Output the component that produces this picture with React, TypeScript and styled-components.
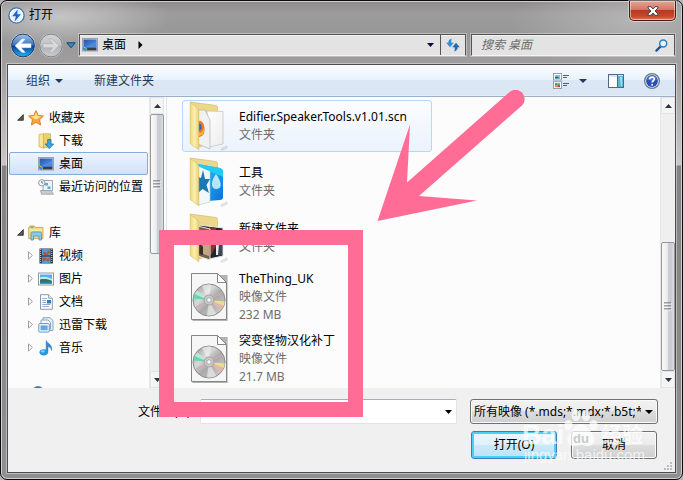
import React from "react";
import styled, { createGlobalStyle, css } from "styled-components";

const PINK = "#ff6c95";
const INK = "#1e395b";

const GlobalStyle = createGlobalStyle`
  *, *::before, *::after { box-sizing: border-box; }
  body { margin: 0; background: #b9b5b5; overflow: hidden; }
  body, button, input, select {
    font-family: "Noto Sans", "Noto Sans CJK SC", sans-serif;
    font-size: 12px;
    line-height: 18px;
    color: #000;
  }
  button { padding: 0; border: 0; background: none; text-align: left; }
  svg { display: block; flex: none; }
`;

/* ---------- window frame ---------- */

const DialogWindow = styled.main`
  position: relative;
  display: flex;
  flex-direction: column;
  height: 100vh;
  min-height: 400px;
  padding: 0 6px 6px;
  border: 1px solid #0c0a0e;
  border-radius: 7px;
  box-shadow: inset 0 0 0 1px #d0cfd0;
  background:
    radial-gradient(ellipse 110px 30px at 60px 16px, rgba(225, 225, 225, 0.6), transparent),
    radial-gradient(ellipse 120px 50px at 630px 20px, rgba(190, 190, 190, 0.7), transparent),
    linear-gradient(#8d898b 0, #9c9c9c 12px, #979797 36px, #a09e9e 64px, #b4b0b0 110px, #c9c6c6 164px, #858282 165px, #8f8f8f 100%);
`;

const TitleBar = styled.header`
  display: flex;
  align-items: center;
  gap: 4px;
  height: 28px;
  flex: none;
  padding-left: 1px;
`;

const Title = styled.h1`
  flex: 1;
  margin: 0;
  font-size: 12px;
  font-weight: 400;
`;

const CloseButton = styled.button`
  display: flex;
  align-items: center;
  justify-content: center;
  align-self: flex-start;
  width: 47px;
  height: 20px;
  border: 1px solid #4b1a17;
  border-top: 0;
  border-radius: 0 0 5px 5px;
  box-shadow: inset 0 0 0 1px rgba(255, 220, 210, 0.6), 0 0 0 1px rgba(255, 255, 255, 0.4);
  background: linear-gradient(#e3a595 0, #d27763 45%, #b93720 50%, #c4472c 80%, #dd7c56 100%);
`;

const AddressRow = styled.nav`
  display: flex;
  align-items: center;
  gap: 5px;
  height: 35px;
  flex: none;
  padding: 0 1px 3px 3px;
`;

const HistoryButtons = styled.div`
  display: flex;
  align-items: center;
  gap: 2px;
  margin-right: -2px;
`;

const glassField = css`
  display: flex;
  align-items: center;
  height: 22px;
  border: 1px solid #555;
  border-bottom-color: #f4f4f4;
  background: #e3e3e3;
  box-shadow: inset 0 1px #f2f2f2, 0 0 0 1px rgba(255, 255, 255, 0.35);
`;

const AddressBar = styled.div`
  ${glassField}
  flex: 384;
  padding-left: 2px;
`;

const Crumb = styled.button`
  display: flex;
  align-items: center;
  gap: 4px;
`;

const CrumbArrow = styled.button`
  margin-left: 12px;
`;

const AddressEnd = styled.div`
  display: flex;
  align-items: center;
  align-self: stretch;
  margin-left: auto;
`;

const RefreshButton = styled.button`
  display: flex;
  align-items: center;
  justify-content: center;
  align-self: stretch;
  width: 25px;
  margin-left: 6px;
  border-left: 1px solid #555;
`;

const SearchBox = styled.label`
  ${glassField}
  flex: 186;
  padding: 0 6px 0 9px;
`;

const SearchInput = styled.input`
  flex: 1;
  min-width: 0;
  padding: 0;
  border: 0;
  outline: 0;
  background: none;
  &::placeholder { color: #6d6d6d; opacity: 1; font-style: italic; }
`;

const Client = styled.section`
  display: flex;
  flex-direction: column;
  flex: 1;
  min-height: 0;
  border: 1px solid #4c4a4c;
  box-shadow: 0 0 0 1px rgba(255, 255, 255, 0.4);
  background: #f0f0f0;
`;

/* ---------- toolbar ---------- */

const Toolbar = styled.div`
  display: flex;
  align-items: center;
  height: 32px;
  flex: none;
  padding: 0 15px 0 18px;
  border-bottom: 1px solid #a0afc3;
  box-shadow: inset 0 -1px #e4edf8;
  background: linear-gradient(#fbfdff 0, #e8f2fb 15px, #dce7f5 15px, #dbe6f4 100%);
`;

const ToolButton = styled.button<{ $gap?: number }>`
  display: flex;
  align-items: center;
  gap: 5px;
  margin-right: ${(p) => p.$gap ?? 0}px;
  color: ${INK};
`;

const Spring = styled.div`
  flex: 1;
`;

/* ---------- panes ---------- */

const Panes = styled.div`
  display: flex;
  flex: 1;
  min-height: 0;
  background: #fcfcfc;
`;

const NavPane = styled.aside`
  display: flex;
  width: 159px;
  flex: none;
  border-right: 1px solid #dbe7f5;
  padding-right: 2px;
`;

const NavTree = styled.div`
  flex: 1;
  min-width: 0;
  padding: 9px 1px 0;
  overflow: hidden;
`;

const NavGroup = styled.div`
  margin-bottom: 23px;
`;

const NavItem = styled.button<{ $level: number; $selected?: boolean }>`
  display: flex;
  align-items: center;
  width: 100%;
  height: 23px;
  gap: 4px;
  padding-left: ${(p) => (p.$level ? 17 : 7)}px;
  border: 1px solid ${(p) => (p.$selected ? "#84acdd" : "transparent")};
  border-radius: 2px;
  background: ${(p) => (p.$selected ? "linear-gradient(#edf4fd, #cfe2fb)" : "none")};
  white-space: nowrap;
`;

const NavLabel = styled.span`
  margin-left: 1px;
`;

const FilePane = styled.div`
  display: flex;
  flex: 1;
  min-width: 0;
`;

const FileList = styled.div`
  display: flex;
  flex-direction: column;
  align-items: flex-start;
  gap: 4px;
  flex: 1;
  min-width: 0;
  padding: 3px 15px 0;
  overflow: hidden;
`;

const FileTile = styled.button<{ $hover?: boolean }>`
  display: flex;
  align-items: center;
  gap: 10px;
  width: 250px;
  max-width: 100%;
  flex: none;
  padding: 0 6px;
  border: 1px solid ${(p) => (p.$hover ? "#b8d6fb" : "transparent")};
  border-radius: 3px;
  background: ${(p) => (p.$hover ? "linear-gradient(#fbfcfe, #ebf3fd)" : "none")};
`;

const FileText = styled.span`
  display: flex;
  flex-direction: column;
  padding: 1px 0;
  white-space: nowrap;
`;

const Detail = styled.span`
  color: #6d6d6d;
`;

/* ---------- scroll bars ---------- */

const ScrollTrack = styled.div`
  display: flex;
  flex-direction: column;
  width: 15px;
  flex: none;
  border-left: 1px solid #e6e6e6;
  background: #efefef;
`;

const ScrollArrow = styled.button`
  display: flex;
  align-items: center;
  justify-content: center;
  height: 17px;
  flex: none;
  border: 1px solid #e2e4e6;
  background: #f4f5f6;
`;

const ScrollSpace = styled.div<{ $size: number }>`
  flex: ${(p) => p.$size} 1 0;
`;

const ScrollThumb = styled.div<{ $size: number }>`
  display: flex;
  align-items: center;
  justify-content: center;
  flex: ${(p) => p.$size} 1 0;
  border: 1px solid #979797;
  border-radius: 2px;
  background: linear-gradient(90deg, #fafafa 0, #ececee 45%, #cdd0d7 50%, #c8cbd3 75%, #dcdee3 100%);
`;

/* ---------- footer ---------- */

const Footer = styled.form`
  display: grid;
  grid-template-columns: 1fr 188px;
  gap: 7px 13px;
  flex: none;
  height: 84px;
  padding: 11px 17px 12px 130px;
  align-content: start;
`;

const NameField = styled.div`
  display: flex;
  align-items: center;
  gap: 3px;
`;

const NameLabel = styled.label`
  width: 59px;
  white-space: nowrap;
`;

const NameCombo = styled.div`
  display: flex;
  align-items: center;
  flex: 1;
  min-width: 0;
  height: 25px;
  padding-right: 4px;
  border: 1px solid #e2e3ea;
  border-top-color: #abadb3;
  border-radius: 2px;
  background: #fff;
`;

const NameInput = styled.input`
  flex: 1;
  min-width: 0;
  border: 0;
  outline: 0;
  background: none;
`;

const TypePicker = styled.div`
  display: grid;
  grid-template-columns: 1fr 12px;
  align-items: center;
  height: 25px;
  border: 1px solid #707070;
  border-radius: 3px;
  box-shadow: inset 0 0 0 1px #fafafa;
  background: linear-gradient(#f2f2f2 0, #ebebeb 50%, #dddddd 50%, #cfcfcf 100%);
  & > svg { grid-area: 1 / 2; pointer-events: none; }
`;

const TypeSelect = styled.select`
  grid-area: 1 / 1 / 2 / 3;
  width: 100%;
  min-width: 0;
  height: 23px;
  padding: 0 16px 0 3px;
  border: 0;
  outline: 0;
  appearance: none;
  background: none;
`;

const Actions = styled.div`
  grid-column: 2;
  display: flex;
  justify-content: space-between;
  padding: 0 1px;
`;

const PushButton = styled.button<{ $primary?: boolean }>`
  width: 86px;
  height: 28px;
  border: 1px solid ${(p) => (p.$primary ? "#3c7fb1" : "#707070")};
  border-radius: 3px;
  text-align: center;
  box-shadow: inset 0 0 0 ${(p) => (p.$primary ? "2px #48d1f7" : "1px #fbfbfb")};
  background: ${(p) =>
    p.$primary
      ? "linear-gradient(#ecf6fc 0, #def2fb 50%, #cbeafa 50%, #bbe2f6 100%)"
      : "linear-gradient(#f2f2f2 0, #ebebeb 50%, #dddddd 50%, #cfcfcf 100%)"};
`;

const Grip = styled.div`
  position: absolute;
  right: 9px;
  bottom: 8px;
`;

/* ---------- overlays ---------- */

const Highlight = styled.div`
  position: absolute;
  left: 158px;
  top: 229px;
  width: 204px;
  height: 187px;
  border: 15px solid ${PINK};
  pointer-events: none;
`;

const Pointer = styled.div`
  position: absolute;
  left: 376px;
  top: 89px;
  pointer-events: none;
`;

const Watermark = styled.div`
  position: absolute;
  right: 36px;
  bottom: 16px;
  width: 124px;
  color: #fff;
  opacity: 0.72;
  pointer-events: none;
  font-family: "Liberation Sans", "Noto Sans CJK SC", sans-serif;
`;

const WatermarkTop = styled.div`
  display: flex;
  align-items: flex-end;
  height: 40px;
  font-size: 27px;
  font-weight: 700;
  line-height: 24px;
`;

const WatermarkName = styled.span`
  margin-left: 3px;
  font-size: 21px;
`;

const WatermarkUrl = styled.div`
  padding-left: 2px;
  font-size: 15px;
  line-height: 16px;
`;

/* ---------- small drawings ---------- */

const Caret = ({ color = "#000", w = 7, h = 4 }: { color?: string; w?: number; h?: number }) => (
  <svg width={w} height={h} viewBox="0 0 8 4" preserveAspectRatio="none">
    <path d="M0 0H8L4 4Z" fill={color} />
  </svg>
);

const AppIcon = () => (
  <svg width="17" height="17" viewBox="0 0 17 17">
    <circle cx="8.5" cy="8.5" r="7.6" fill="#e9f2fc" stroke="#3c78b8" strokeWidth="1.4" />
    <circle cx="8.5" cy="8.5" r="6.2" fill="none" stroke="#fff" />
    <path d="M9.8 2.2L4.2 9.3H7.8L6.6 14.8L12.8 7.2H9.2Z" fill="#1767cf" />
  </svg>
);

const CloseGlyph = () => (
  <svg width="12" height="10" viewBox="0 0 12 10">
    <path d="M1 .7H4L6 3 8 .7H11V2L8 5 11 8V9.3H8L6 7 4 9.3H1V8L4 5 1 2Z" fill="#fff" stroke="#44434f" strokeWidth="1" />
  </svg>
);

const RoundArrow = ({ back }: { back?: boolean }) => {
  const id = back ? "navBack" : "navForward";
  return (
    <svg width="26" height="26" viewBox="0 0 26 26">
      <defs>
        <linearGradient id={id} x1="0" y1="0" x2="0" y2="1">
          <stop offset="0" stopColor={back ? "#a3c3e6" : "#d3d4d6"} />
          <stop offset=".48" stopColor={back ? "#3a72bb" : "#c0c2c4"} />
          <stop offset=".52" stopColor={back ? "#0b3f94" : "#aeb0b3"} />
          <stop offset="1" stopColor={back ? "#22b4f0" : "#cbcdcf"} />
        </linearGradient>
      </defs>
      <circle cx="13" cy="13.5" r="12.2" fill={back ? "#d8dee6" : "#c7c7c7"} />
      <circle cx="13" cy="13.5" r="11.4" fill={`url(#${id})`} stroke={back ? "#1c3c70" : "#7f8183"} />
      <path
        d={back ? "M5 13.7L12 7H15.2L11.2 11.7H21V15.7H11.2L15.2 20.4H12Z" : "M21 13.7L14 7H10.8L14.8 11.7H5V15.7H14.8L10.8 20.4H14Z"}
        fill={back ? "#fff" : "#d9dadb"}
        stroke={back ? "#dbe8f7" : "#a2a4a6"}
        strokeWidth=".5"
      />
    </svg>
  );
};

const HistoryCaret = () => (
  <svg width="10" height="7" viewBox="0 0 10 7">
    <path d="M.8 .8H9.2L5 5.8Z" fill="#2b8fc9" stroke="#1b416b" />
  </svg>
);

const DesktopIcon = () => (
  <svg width="16" height="14" viewBox="0 0 16 14">
    <defs>
      <linearGradient id="desk" x1="0" y1="0" x2="1" y2="1">
        <stop offset="0" stopColor="#2d50a8" />
        <stop offset=".5" stopColor="#3c78d0" />
        <stop offset="1" stopColor="#2e62bd" />
      </linearGradient>
    </defs>
    <rect x=".5" y=".5" width="15" height="12.5" fill="#d3d8df" stroke="#9aa3af" />
    <rect x="1.5" y="1.5" width="13" height="8.5" fill="url(#desk)" />
    <path d="M4 9L14.5 3V9.5Z" fill="#6ba0e6" opacity=".55" />
    <rect x="5" y="10" width="9.5" height="2.4" fill="#393d45" />
    <circle cx="3.2" cy="10.6" r="2.2" fill="#2b7fd2" />
    <path d="M2.2 9h1.3v1.3H2.2z" fill="#f3c533" />
    <path d="M3.5 10.4h1.4v1.4H3.5z" fill="#8bcf3c" />
  </svg>
);

const RefreshIcon = () => (
  <svg width="14" height="14" viewBox="0 0 14 14">
    <path d="M5.8 .6C3.2 1.2 2.4 2.8 2.3 4.8H.2L4 9.2 7.8 4.8H5.3C5.2 3.2 5.2 2 5.8 .6Z" fill="#2f8fd0" />
    <path d="M8.2 13.4C10.8 12.8 11.6 11.2 11.7 9.2H13.8L10 4.8 6.2 9.2H8.7C8.8 10.8 8.8 12 8.2 13.4Z" fill="#2668b3" />
  </svg>
);

const SearchIcon = () => (
  <svg width="13" height="13" viewBox="0 0 13 13">
    <path d="M5.6 7.4L1.4 11.6" stroke="#27508f" strokeWidth="2.2" strokeLinecap="round" />
    <circle cx="8.2" cy="4.6" r="3.5" fill="#e9f5fd" stroke="#2e7fc0" strokeWidth="1.5" />
  </svg>
);

const ViewIcon = () => (
  <svg width="17" height="16" viewBox="0 0 17 16">
    <rect x=".5" y=".5" width="8" height="6.5" fill="#fff" stroke="#8fa0b4" />
    <rect x="2" y="2" width="5" height="3.5" fill="#79c3dd" />
    <path d="M2 5.5V4.3L4 3.6 7 5.5Z" fill="#1f6a44" />
    <rect x=".5" y="8.7" width="8" height="6.8" fill="#fff" stroke="#8fa0b4" />
    <path d="M2 10.2h2.5v2H2z" fill="#3b77c9" />
    <path d="M4.5 10.2H7v2H4.5z" fill="#6aab38" />
    <path d="M2 12.2h2.5v2H2z" fill="#d9852d" />
    <path d="M4.5 12.2H7v2H4.5z" fill="#b73b32" />
    <path d="M10 2.5h6M10 4.5h4M10 10.5h6M10 12.5h4" stroke="#4b617d" />
  </svg>
);

const PreviewIcon = () => (
  <svg width="16" height="14" viewBox="0 0 16 14">
    <rect x=".5" y=".5" width="15" height="13" fill="#fff" stroke="#4f6888" />
    <path d="M1 2H15" stroke="#b3cbe0" />
    <rect x="10" y="2" width="5" height="11" fill="#5fb4d3" />
    <path d="M12 3h2v9h-1z" fill="#a9e0ee" />
    <path d="M9.5 1V13" stroke="#4f6888" />
  </svg>
);

const HelpIcon = () => (
  <svg width="16" height="16" viewBox="0 0 16 16">
    <circle cx="8" cy="8" r="7.4" fill="#e4e8ee" stroke="#6c7683" strokeWidth="1.2" />
    <circle cx="8" cy="8" r="5.9" fill="#2450b8" />
    <path d="M3 6.5A5.2 5.2 0 0 1 13 6.5C10 8 6 8 3 6.5Z" fill="#6f96de" opacity=".6" />
    <path d="M5.7 6.3C5.7 3.4 10.4 3.5 10.3 6.2C10.3 7.7 8.1 7.8 8.1 9.6" fill="none" stroke="#fff" strokeWidth="1.7" />
    <circle cx="8.1" cy="11.7" r="1" fill="#fff" />
  </svg>
);

const Twisty = ({ open }: { open?: boolean }) =>
  open ? (
    <svg width="7" height="7" viewBox="0 0 7 7">
      <path d="M6.3 .6V6.3H.6Z" fill="#595959" stroke="#262626" strokeWidth=".8" />
    </svg>
  ) : (
    <svg width="7" height="9" viewBox="0 0 7 9">
      <path d="M1.5 .9L5.4 4.5L1.5 8.1Z" fill="#fff" stroke="#a0a0a0" />
    </svg>
  );

type IconName =
  | "star" | "download" | "desktop" | "recent" | "library" | "video"
  | "picture" | "document" | "thunder" | "music" | "computer";

const NavIcon = ({ name }: { name: IconName }) => {
  if (name === "desktop") return <DesktopIcon />;
  return (
    <svg width="16" height="16" viewBox="0 0 16 16">
      {name === "star" && (
        <>
          <path d="M8 .6L10.2 5.4 15.4 6 11.6 9.6 12.6 15 8 12.3 3.4 15 4.4 9.6 .6 6 5.8 5.4Z" fill="#f9a63a" stroke="#df7422" strokeWidth=".9" />
          <path d="M8 2.2L9.5 6.1 13.3 6.6 8 9.4 2.7 6.6 6.5 6.1Z" fill="#fde08e" />
        </>
      )}
      {name === "download" && (
        <>
          <path d="M1 1.5L5.5 .8V15.2L1 13.8Z" fill="#f8e694" stroke="#cfae4a" strokeWidth=".7" />
          <path d="M5.5 .8H12.5V13.5L5.5 15.2Z" fill="#eccf6d" stroke="#cfae4a" strokeWidth=".7" />
          <path d="M9.7 6.5H13V11H15.6L11.3 15.6 7.2 11H9.7Z" fill="#3ba4e2" stroke="#1a6cb5" strokeWidth=".8" />
        </>
      )}
      {name === "recent" && (
        <>
          <path d="M5 1.5H14.5V12H5Z" fill="#eef3f8" stroke="#9aa7b5" />
          <path d="M7 4h3v2.5H7zM9.5 7.5h3V10h-3z" fill="#5aa9d8" />
          <path d="M2.5 11.5H13L15.5 15.2H3.5Z" fill="#c9cdd2" stroke="#8d949c" strokeWidth=".7" />
          <circle cx="3.8" cy="3.8" r="3.2" fill="#f3f5f7" stroke="#8f979f" />
          <path d="M3.8 2V4H5.2" fill="none" stroke="#555" strokeWidth=".8" />
        </>
      )}
      {name === "library" && (
        <>
          <path d="M.7 2.2L2 1H6.4L7.4 2.4H15V13.6H.7Z" fill="#f2da83" stroke="#c3a045" strokeWidth=".8" />
          <path d="M1.2 5H14.6" stroke="#fdf3c4" />
          <path d="M2.5 2.2h3" stroke="#57ac4a" strokeWidth="1.2" />
          <path d="M3 8.5C3 7.4 3.6 7 4.5 7H12C13 7 13.5 7.4 13.5 8.5V15H11V11H5.5V15H3Z" fill="#8ccbe8" stroke="#4793bd" strokeWidth=".8" />
        </>
      )}
      {name === "video" && (
        <>
          <rect x="1.5" y=".5" width="13.5" height="15" fill="#303338" />
          <rect x="4" y="1" width="8.5" height="6.4" fill="#4e9ed6" />
          <rect x="4" y="8.6" width="8.5" height="6.4" fill="#4e9ed6" />
          <path d="M4.5 5L7 3.5 8.3 5.5 10.5 2 12 4.5 9.5 7H6ZM4.5 10L7 9.3 9 11 12 9.5 10.5 13.5 7.5 12 5 14Z" fill="#b5563c" />
          <path d="M2.7 1V15.3M13.8 1V15.3" stroke="#dfe6ec" strokeWidth="1" strokeDasharray="1 1" />
        </>
      )}
      {name === "picture" && (
        <>
          <rect x=".5" y="2" width="15" height="12" fill="#fff" stroke="#8d99a6" />
          <rect x="2" y="3.5" width="12" height="9" fill="#5aaee5" />
          <path d="M2 6.5C5 5 9 5.5 14 8V10H2Z" fill="#c4e7f6" />
          <path d="M2 8.5C6 7.5 10 8 14 10V12.5H2Z" fill="#2b7c5b" />
          <path d="M2 11H14V12.5H2Z" fill="#2c82a6" />
        </>
      )}
      {name === "document" && (
        <>
          <path d="M2.5 .7H10.5L14.3 4.3V15.3H2.5Z" fill="#fff" stroke="#8d99a6" />
          <path d="M10.5 .7V4.3H14.3" fill="#dfe6ed" stroke="#8d99a6" strokeWidth=".8" />
          <path d="M4.3 4.5H9M4.3 6.5H8M4.3 8.5H8M4.3 10.5H12.5M4.3 12.5H11" stroke="#96a9d0" />
          <rect x="9" y="6" width="4" height="3.5" fill="#2f7db8" />
        </>
      )}
      {name === "thunder" && (
        <>
          <path d="M5 .7H12L15 3.6V13.5H5Z" fill="#e4eff9" stroke="#86a7c4" />
          <path d="M3 3H10L12.5 5.5V12H3Z" fill="#f4f9fd" stroke="#86a7c4" />
          <rect x=".8" y="6.5" width="10.5" height="8.6" rx="1" fill="#e8f3fc" stroke="#6d9cc6" />
          <rect x="2.6" y="8.4" width="7" height="4.8" fill="#61a9e6" />
        </>
      )}
      {name === "music" && (
        <>
          <path d="M8.2 .5C9 3.6 14.8 4.2 13.6 10.5C13 7.8 11.5 6.8 9.9 6.5V12H8.2Z" fill="#2c8bd6" stroke="#1d6fb8" strokeWidth=".5" />
          <ellipse cx="5.8" cy="12.3" rx="4.3" ry="3.1" fill="#2b96df" />
          <ellipse cx="4.8" cy="11.4" rx="2" ry="1.1" fill="#8fd0f5" />
        </>
      )}
      {name === "computer" && <circle cx="10" cy="7" r="6.5" fill="#3d66b4" stroke="#6f89bd" />}
    </svg>
  );
};

type Art = "browser" | "tools" | "photo" | "disc";

const FolderArt = ({ art }: { art: Art }) => (
  <svg width="40" height="50" viewBox="0 0 40 50">
    <defs>
      <linearGradient id={`flap-${art}`} x1="0" y1="0" x2="1" y2="0">
        <stop offset="0" stopColor="#f0d680" />
        <stop offset=".5" stopColor="#fbefad" />
        <stop offset="1" stopColor="#edd078" />
      </linearGradient>
      <linearGradient id={`inside-${art}`} x1="0" y1="0" x2="1" y2="1">
        <stop offset="0" stopColor={art === "tools" ? "#23d1f2" : "#ffffff"} />
        <stop offset="1" stopColor={art === "tools" ? "#0b6fe0" : "#ececec"} />
      </linearGradient>
    </defs>
    <path d="M31 48L38 44 39 47 33 50Z" fill="#000" opacity=".1" />
    <path d="M1.5 1L27.5 4.5 28.5 6V40L10 46Z" fill="#ecd78c" stroke="#d1b55f" strokeWidth=".6" />
    {art === "browser" && (
      <>
        <path d="M18 10L34 10.5V43L20 46Z" fill={`url(#inside-${art})`} stroke="#b9b9b9" strokeWidth=".6" />
        <path d="M9 9H16L21 19V48L9 43Z" fill="#f1f1f0" stroke="#a9a9a9" strokeWidth=".6" />
        <path d="M9 20C13 19 15.5 23 15.5 28.5S13 36 9 36Z" fill="#e8772e" />
        <path d="M9 22C12 22 13 25 12.5 28L9 31Z" fill="#3167ad" />
        <path d="M9 31C12 33 13.5 31 15 27C15.5 33 13 35 9 35Z" fill="#f6b53b" />
      </>
    )}
    {art === "tools" && (
      <>
        <path d="M9 7L31 11Q34 12 34 15V40Q34 43 31 43L19 44Z" fill={`url(#inside-${art})`} />
        <path d="M27 17C32 24 34 31 28 32S21 25 27 17Z" fill="#d4f3fd" opacity=".85" />
        <path d="M9 9L21 14V45L9 48Z" fill="#f1f6f9" stroke="#b8c8d4" strokeWidth=".6" />
        <path d="M9 7L31 11 34 15V20L9 9Z" fill="#20cdf0" />
        <path d="M14 13L16 22 21 22 17.5 28 20 36 13.5 32 9 36V20L12 21Z" fill="#1879b5" />
      </>
    )}
    {art === "photo" && (
      <>
        <path d="M10 12L34 15V43L20 46Z" fill="#20242e" stroke="#e8e8e8" />
        <path d="M20 14L27 15V33L22 42H20Z" fill="#7d3c2f" />
        <path d="M28 24L33 30V42L29 43Z" fill="#3f4653" />
        <path d="M27 29l3 1-1 12h-2z" fill="#e9eaea" />
        <path d="M9 13L21 16V47L9 43Z" fill="#76604b" stroke="#e9e6df" />
        <path d="M13 23L17 20 20 28V43L14 41Z" fill="#c3a684" />
        <path d="M10 30L14 34V42L10 41Z" fill="#38302c" />
      </>
    )}
    <path d="M1.2 1.2L9 7.5Q9.8 8.2 9.8 10V48.8L1.2 42.5Z" fill={`url(#flap-${art})`} stroke="#d6ba62" strokeWidth=".6" />
  </svg>
);

const DiscFileArt = () => (
  <svg width="40" height="50" viewBox="0 0 40 50">
    <defs>
      <linearGradient id="disc" x1="0" y1="0" x2="1" y2="1">
        <stop offset="0" stopColor="#8f8f8f" />
        <stop offset=".35" stopColor="#d9d9d9" />
        <stop offset=".55" stopColor="#a9a9a9" />
        <stop offset="1" stopColor="#d5d5d5" />
      </linearGradient>
    </defs>
    <path d="M3.5 3H38.6V49H3.5Z" fill="#777" opacity=".55" />
    <path d="M2.5 1.5H28.5L37.5 10.5V47.5H2.5Z" fill="#f6f6f6" stroke="#858585" />
    <path d="M28.5 1.5V10.5H37.5Z" fill="#fff" stroke="#858585" />
    <circle cx="20" cy="28" r="16" fill="url(#disc)" stroke="#8a8a8a" />
    <path d="M20 28L13 14A16 16 0 0 1 22 12.4Z" fill="#f3f3f3" opacity=".6" />
    <path d="M20 28L27 42A16 16 0 0 1 18 43.6Z" fill="#f3f3f3" opacity=".6" />
    <path d="M20 28L5.6 22A16 16 0 0 0 4.6 26.5Z" fill="#64d7b2" />
    <path d="M20 28L8.3 18.5A16 16 0 0 0 5.6 22Z" fill="#b8e8d0" />
    <path d="M20 28L34.5 34A16 16 0 0 0 35.8 29.5Z" fill="#ecdc8e" />
    <path d="M20 28L31.5 38.5A16 16 0 0 0 34.5 34Z" fill="#e4b6b0" />
    <path d="M7 35.5L33 20.5" stroke="#d5a5ba" strokeWidth="1.3" />
    <circle cx="20" cy="28" r="5" fill="#c9c9c9" stroke="#a4a4a4" />
    <circle cx="20" cy="28" r="2.2" fill="#fff" stroke="#999" strokeWidth=".8" />
  </svg>
);

const ThumbGrip = () => (
  <svg width="8" height="9" viewBox="0 0 8 9">
    <path d="M0 1H7M0 4H7M0 7H7" stroke="#555" strokeWidth="1.2" />
    <path d="M0 2H8M0 5H8M0 8H8" stroke="#fff" strokeWidth=".8" />
  </svg>
);

const ScrollBar = ({ before, size, after, name }: { before: number; size: number; after: number; name: string }) => (
  <ScrollTrack>
    <ScrollArrow type="button" aria-label={`${name} 向上`}>
      <svg width="7" height="4" viewBox="0 0 7 4"><path d="M0 4L3.5 0 7 4Z" fill="#333" /></svg>
    </ScrollArrow>
    <ScrollSpace $size={before} />
    <ScrollThumb $size={size}><ThumbGrip /></ScrollThumb>
    <ScrollSpace $size={after} />
    <ScrollArrow type="button" aria-label={`${name} 向下`}>
      <Caret color="#333" />
    </ScrollArrow>
  </ScrollTrack>
);

/* ---------- data ---------- */

type NavEntry = { label?: string; icon: IconName; selected?: boolean };

const favorites: NavEntry[] = [
  { label: "下载", icon: "download" },
  { label: "桌面", icon: "desktop", selected: true },
  { label: "最近访问的位置", icon: "recent" },
];

const libraries: NavEntry[] = [
  { label: "视频", icon: "video" },
  { label: "图片", icon: "picture" },
  { label: "文档", icon: "document" },
  { label: "迅雷下载", icon: "thunder" },
  { label: "音乐", icon: "music" },
];

const files: { name: string; details: string[]; art: Art; hover?: boolean }[] = [
  { name: "Edifier.Speaker.Tools.v1.01.scn", details: ["文件夹"], art: "browser", hover: true },
  { name: "工具", details: ["文件夹"], art: "tools" },
  { name: "新建文件夹", details: ["文件夹"], art: "photo" },
  { name: "TheThing_UK", details: ["映像文件", "232 MB"], art: "disc" },
  { name: "突变怪物汉化补丁", details: ["映像文件", "21.7 MB"], art: "disc" },
];

const Twist = styled.span`
  width: 7px;
`;

const NavRow = ({ label, icon, selected, level, twist }: NavEntry & { level: number; twist?: "open" | "closed" }) => (
  <NavItem type="button" $level={level} $selected={selected} aria-label={label ?? "计算机"}>
    <Twist>{twist && <Twisty open={twist === "open"} />}</Twist>
    <NavIcon name={icon} />
    {label && <NavLabel>{label}</NavLabel>}
  </NavItem>
);

export default function App() {
  return (
    <>
      <GlobalStyle />
      <DialogWindow>
        <TitleBar>
          <AppIcon />
          <Title>打开</Title>
          <CloseButton aria-label="关闭"><CloseGlyph /></CloseButton>
        </TitleBar>

        <AddressRow>
          <HistoryButtons>
            <button type="button" aria-label="后退"><RoundArrow back /></button>
            <button type="button" aria-label="前进"><RoundArrow /></button>
            <button type="button" aria-label="历史记录"><HistoryCaret /></button>
          </HistoryButtons>
          <AddressBar>
            <Crumb type="button"><DesktopIcon />桌面</Crumb>
            <CrumbArrow type="button" aria-label="展开">
              <svg width="5" height="8" viewBox="0 0 5 8"><path d="M.5 0L4.5 4 .5 8Z" /></svg>
            </CrumbArrow>
            <AddressEnd>
              <button type="button" aria-label="以前的位置"><Caret color="#04045c" /></button>
              <RefreshButton type="button" aria-label="刷新"><RefreshIcon /></RefreshButton>
            </AddressEnd>
          </AddressBar>
          <SearchBox>
            <SearchInput placeholder="搜索 桌面" aria-label="搜索 桌面" />
            <SearchIcon />
          </SearchBox>
        </AddressRow>

        <Client>
          <Toolbar>
            <ToolButton type="button" $gap={31}>组织<Caret color={INK} w={8} /></ToolButton>
            <ToolButton type="button">新建文件夹</ToolButton>
            <Spring />
            <ToolButton type="button" $gap={9} aria-label="视图"><ViewIcon /></ToolButton>
            <ToolButton type="button" $gap={21} aria-label="更多视图"><Caret color={INK} w={8} /></ToolButton>
            <ToolButton type="button" $gap={20} aria-label="预览窗格"><PreviewIcon /></ToolButton>
            <ToolButton type="button" aria-label="帮助"><HelpIcon /></ToolButton>
          </Toolbar>

          <Panes>
            <NavPane>
              <NavTree>
                <NavGroup>
                  <NavRow label="收藏夹" icon="star" level={0} twist="open" />
                  {favorites.map((e) => <NavRow key={e.label} {...e} level={1} />)}
                </NavGroup>
                <NavGroup>
                  <NavRow label="库" icon="library" level={0} twist="open" />
                  {libraries.map((e) => <NavRow key={e.label} {...e} level={1} twist="closed" />)}
                </NavGroup>
                <NavGroup>
                  <NavRow icon="computer" level={0} />
                </NavGroup>
              </NavTree>
              <ScrollBar name="导航" before={0} size={139} after={117} />
            </NavPane>
            <FilePane>
              <FileList>
                {files.map((f) => (
                  <FileTile key={f.name} type="button" $hover={f.hover}>
                    {f.art === "disc" ? <DiscFileArt /> : <FolderArt art={f.art} />}
                    <FileText>
                      <span>{f.name}</span>
                      {f.details.map((d) => <Detail key={d}>{d}</Detail>)}
                    </FileText>
                  </FileTile>
                ))}
              </FileList>
              <ScrollBar name="文件" before={128} size={128} after={0} />
            </FilePane>
          </Panes>

          <Footer onSubmit={(e) => e.preventDefault()}>
            <NameField>
              <NameLabel htmlFor="file-name">文件名(N):</NameLabel>
              <NameCombo>
                <NameInput id="file-name" />
                <Caret />
              </NameCombo>
            </NameField>
            <TypePicker>
              <TypeSelect aria-label="文件类型">
                <option>所有映像 (*.mds;*.mdx;*.b5t;*.</option>
              </TypeSelect>
              <Caret w={8} />
            </TypePicker>
            <Actions>
              <PushButton type="submit" $primary>打开(O)</PushButton>
              <PushButton type="button">取消</PushButton>
            </Actions>
          </Footer>
        </Client>

        <Grip>
          <svg width="9" height="9" viewBox="0 0 9 9">
            <path d="M6 0h2v2H6zM3 3h2v2H3zM6 3h2v2H6zM0 6h2v2H0zM3 6h2v2H3zM6 6h2v2H6z" fill="#bcbcbc" />
          </svg>
        </Grip>

        <Highlight />
        <Pointer>
          <svg width="150" height="134" viewBox="0 0 150 134">
            <path d="M.5 131L33 34.5 30 92.5 132 2.5A9 9 0 0 1 145 15.5L42 106 100 110.5Z" fill={PINK} />
          </svg>
        </Pointer>

        <Watermark>
          <WatermarkTop>
            <span>Bai</span>
            <svg width="34" height="38" viewBox="0 0 34 38">
              <ellipse cx="4.5" cy="16" rx="4" ry="5.2" fill="#fff" />
              <ellipse cx="12" cy="6.5" rx="4.2" ry="5.8" fill="#fff" />
              <ellipse cx="22" cy="6.5" rx="4.2" ry="5.8" fill="#fff" />
              <ellipse cx="29.5" cy="16" rx="4" ry="5.2" fill="#fff" />
              <path d="M17 15C22 15 24 20 28 24S32 37 24 37C20 37 19 36 17 36S14 37 10 37C2 37 2 28 6 24S12 15 17 15Z" fill="#fff" />
              <text x="17" y="34" textAnchor="middle" fontSize="13" fontWeight="700" fill="#b9bcbe">du</text>
            </svg>
            <WatermarkName>经验</WatermarkName>
          </WatermarkTop>
          <WatermarkUrl>jingyan.baidu.com</WatermarkUrl>
        </Watermark>
      </DialogWindow>
    </>
  );
}
